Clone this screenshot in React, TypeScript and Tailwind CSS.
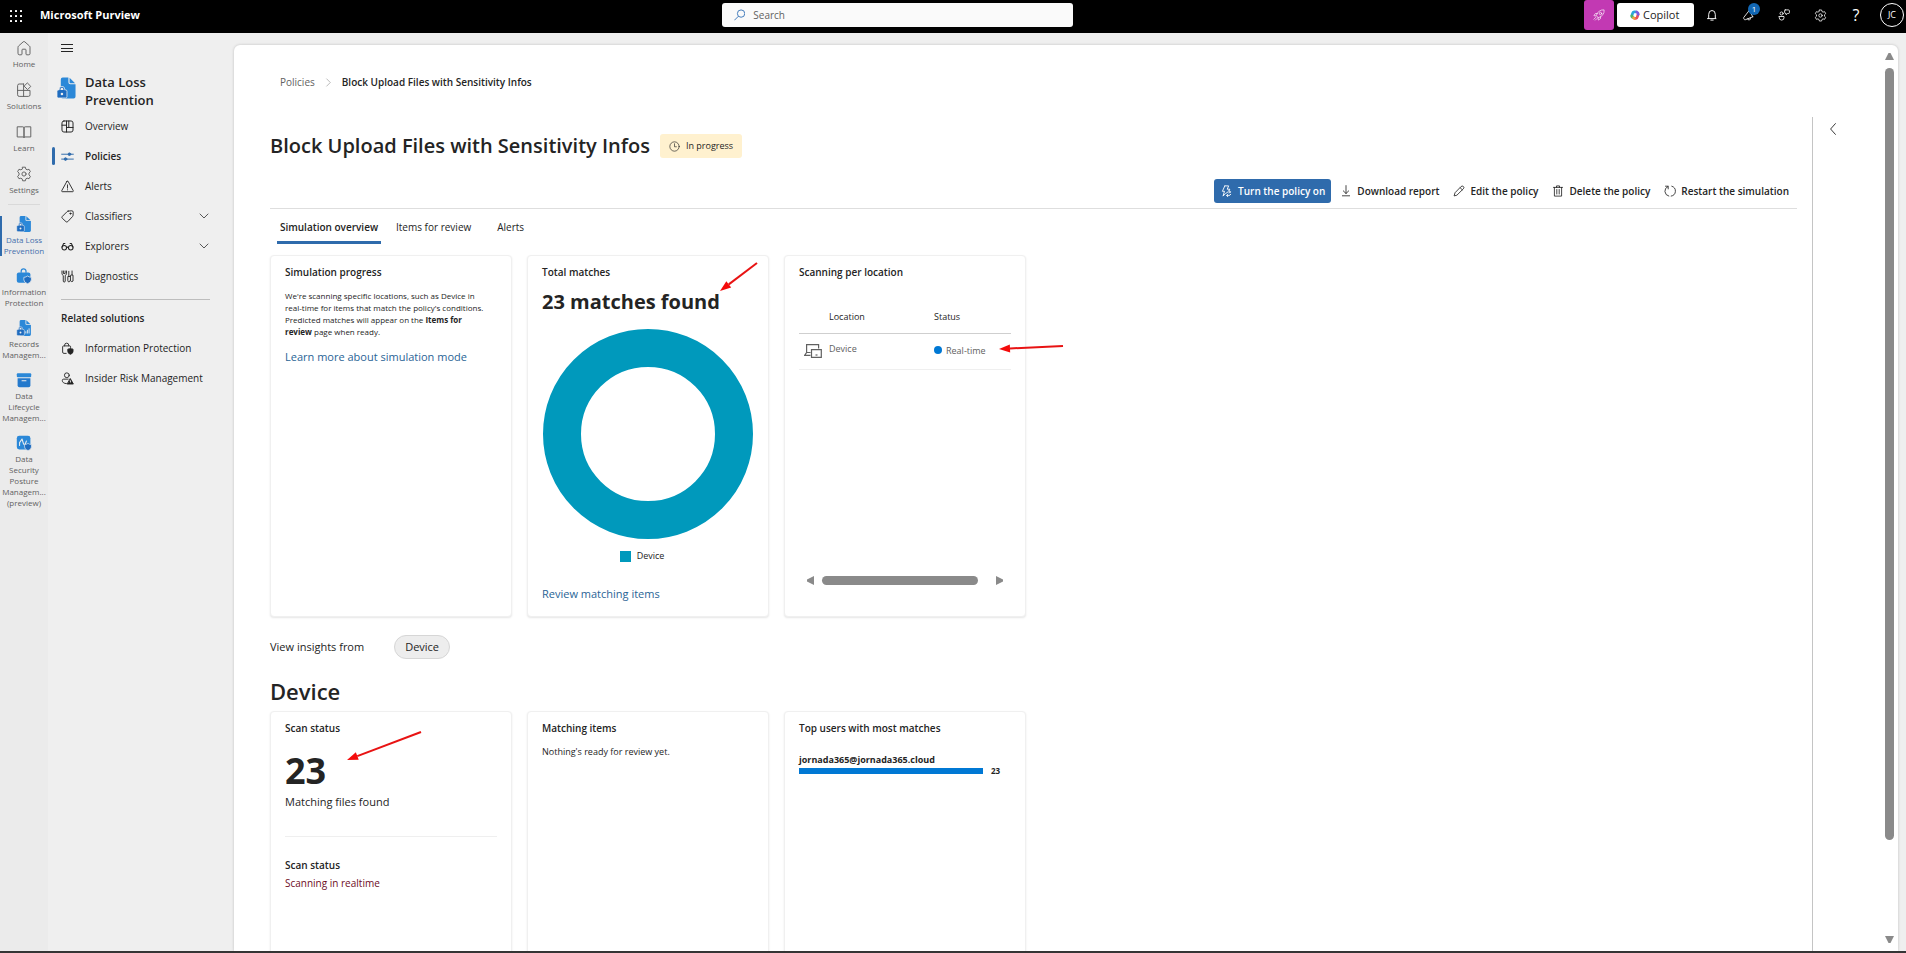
import React from 'react';

type IconProps = { className?: string };

const Stroke: React.FC<{ className?: string; width?: number; children: React.ReactNode }> = ({ className, width = 1.2, children }) => (
  <svg viewBox="0 0 20 20" className={className} fill="none" stroke="currentColor" strokeWidth={width} strokeLinecap="round" strokeLinejoin="round" aria-hidden="true">
    {children}
  </svg>
);

const HomeIcon = ({ className }: IconProps) => (
  <Stroke className={className}>
    <path d="M2.500 9a2 2 0 0 1 .7-1.500L9 2.300a1.500 1.500 0 0 1 2 0l5.800 5.200a2 2 0 0 1 .7 1.500v8a1.500 1.500 0 0 1-1.500 1.500h-2.500a1 1 0 0 1-1-1V12.500a1 1 0 0 0-1-1h-3a1 1 0 0 0-1 1v5a1 1 0 0 1-1 1H4A1.500 1.500 0 0 1 2.500 17Z" />
  </Stroke>
);

const SolutionsIcon = ({ className }: IconProps) => (
  <Stroke className={className}>
    <path d="M9.500 2.500H4A2 2 0 0 0 2 4.500v11.500a2 2 0 0 0 2 2h11.500a2 2 0 0 0 2-2v-5.500H2M9.500 2.500V18" />
    <path d="m14.500 1.500 4 4-4 4-4-4Z" />
  </Stroke>
);

const LearnIcon = ({ className }: IconProps) => (
  <Stroke className={className}>
    <path d="M2 3.500h6.500A1.500 1.500 0 0 1 10 5v12a1 1 0 0 0-1-.8H2Zm16 0h-6.500A1.500 1.500 0 0 0 10 5v12a1 1 0 0 1 1-.8h7Z" />
  </Stroke>
);

const GearIcon = ({ className }: IconProps) => (
  <Stroke className={className}>
    <circle cx="10" cy="10" r="2.600" />
    <path d="M8.300 1.500h3.400l.6 2.400 1.600.9 2.400-.7 1.700 3-1.800 1.700v2.400l1.800 1.700-1.700 3-2.400-.7-1.600.9-.6 2.400H8.300l-.6-2.400-1.600-.9-2.400.7-1.700-3 1.800-1.700V8.800L2 7.100l1.700-3 2.400.7 1.600-.9Z" />
  </Stroke>
);

const OverviewIcon = ({ className }: IconProps) => (
  <Stroke className={className} width={1.5}>
    <rect x="1.500" y="1.500" width="17" height="17" rx="3" />
    <path d="M8.500 1.500v17M1.500 8h7M12 1.500v10M8.500 11.500h10" />
  </Stroke>
);

const PoliciesIcon = ({ className }: IconProps) => (
  <Stroke className={className} width={1.5}>
    <path d="M1 6.500h18M1 14h18" />
    <circle cx="13" cy="6.500" r="2" fill="currentColor" />
    <circle cx="7" cy="14" r="2" fill="currentColor" />
  </Stroke>
);

const AlertIcon = ({ className }: IconProps) => (
  <Stroke className={className} width={1.4}>
    <path d="M9.100 2.100 1.100 16.500a1 1 0 0 0 .9 1.500h16a1 1 0 0 0 .9-1.500L10.900 2.100a1 1 0 0 0-1.800 0ZM10 7.500v5M10 15v.3" />
  </Stroke>
);

const TagIcon = ({ className }: IconProps) => (
  <Stroke className={className} width={1.4}>
    <path d="m11 1.700 5.500-.5a2.300 2.300 0 0 1 2.300 2.300l-.3 5a2 2 0 0 1-.6 1.400l-7.500 8a2 2 0 0 1-2.800 0L2 12.700a2 2 0 0 1 0-2.800l7.500-7.500a2 2 0 0 1 1.500-.7Z" />
    <circle cx="14.500" cy="5.500" r=".9" fill="currentColor" />
  </Stroke>
);

const GlassesIcon = ({ className }: IconProps) => (
  <Stroke className={className} width={1.6}>
    <circle cx="5" cy="12" r="3.500" />
    <circle cx="15" cy="12" r="3.500" />
    <path d="M8.500 11.500q1.500-1 3 0M1.500 11 4 5.500h2M18.500 11 16 5.500h-2" />
  </Stroke>
);

const ToolsIcon = ({ className }: IconProps) => (
  <Stroke className={className} width={1.4}>
    <path d="M1.500 1.500v4Q1.500 7.500 3.500 8.500V17a1.500 1.500 0 0 0 3 0V8.500q2-1 2-3v-4M3.700 1.500v4h2.600v-4M12 2v8M14 10h-3.500v6.500a1.700 1.700 0 0 0 3.500 0M17 1.500v6M15 8q2-1 3.500 0v9q-1.700 2-3.500 0Z" />
  </Stroke>
);

const BagShieldIcon = ({ className }: IconProps) => (
  <Stroke className={className} width={1.4}>
    <path d="M8 17.500H4.500A2 2 0 0 1 2.500 15.500V7.500A1.500 1.500 0 0 1 4 6h9.500A1.500 1.500 0 0 1 15 7.500M5.500 6V5a3.200 3.200 0 0 1 6.400 0v1" />
    <path d="M14.500 9.500q1.500 1.300 4 1.500v3.500q0 3-4 4.500-4-1.500-4-4.500V11q2.500-.2 4-1.500Z" fill="currentColor" />
  </Stroke>
);

const UserRiskIcon = ({ className }: IconProps) => (
  <Stroke className={className} width={1.4}>
    <circle cx="9" cy="5" r="3.700" />
    <path d="M11 11H4a2 2 0 0 0-2 2c0 3 2.500 4.700 6.300 4.900" />
    <path d="m14.500 10.500 4.500 8h-9Z" fill="currentColor" />
    <path d="M14.500 13.500v2" stroke="#efefef" />
  </Stroke>
);

// blue product marks used in the left rail

const BlueFile: React.FC<{ className?: string; chart?: boolean }> = ({ className, chart }) => (
  <svg viewBox="0 0 20 22" className={className} aria-hidden="true">
    <path d="M4 2a2 2 0 0 1 2-2h6v5a2 2 0 0 0 2 2h5.500v13a2 2 0 0 1-2 2H6a2 2 0 0 1-2-2Z" fill="#2b88d8" />
    <path d="M13.200.3 19 6h-5a.8.8 0 0 1-.8-.8Z" fill="#2b88d8" />
    <path d="M0 14.500A1.500 1.500 0 0 1 1.500 13h.8v-.8a2.900 2.900 0 0 1 5.800 0v.8h.9a1.500 1.500 0 0 1 1.500 1.500v5.500A1.500 1.500 0 0 1 9 21.500H1.500A1.500 1.500 0 0 1 0 20Z" fill="#1f6cbf" stroke="#efefef" strokeWidth=".8" />
    <path d="M3.700 13v-.8a1.500 1.500 0 0 1 3 0v.8Z" fill="#efefef" />
    <circle cx="5.200" cy="17.200" r="1.300" fill="#efefef" />
    {chart && <path d="M12.500 18.500v-3M14.700 18.500v-5M17 18.500v-7" stroke="#efefef" strokeWidth="1.200" />}
  </svg>
);

const BlueBag = ({ className }: IconProps) => (
  <svg viewBox="0 0 20 20" className={className} aria-hidden="true">
    <path d="M6.500 6V4a3 3 0 0 1 6 0v2" fill="none" stroke="#2b88d8" strokeWidth="1.600" />
    <rect x="1" y="5.500" width="17" height="13" rx="2.500" fill="#2b88d8" />
    <path d="M14.500 10q1.800 1.500 4.700 1.700v3q0 3.300-4.700 5-4.700-1.700-4.700-5v-3q2.900-.2 4.700-1.700Z" fill="#1f6cbf" stroke="#efefef" strokeWidth=".9" />
  </svg>
);

const BlueArchive = ({ className }: IconProps) => (
  <svg viewBox="0 0 20 20" className={className} aria-hidden="true">
    <rect x="1" y="1.500" width="18" height="5" rx="1.200" fill="#2b88d8" />
    <path d="M2 7.700h16v9a2.300 2.300 0 0 1-2.300 2.300H4.300A2.300 2.300 0 0 1 2 16.700Z" fill="#2479cc" />
    <path d="M7.500 11h5" stroke="#efefef" strokeWidth="1.300" strokeLinecap="round" />
  </svg>
);

const BluePosture = ({ className }: IconProps) => (
  <svg viewBox="0 0 20 20" className={className} aria-hidden="true">
    <rect x="1" y="1" width="17" height="17" rx="3" fill="#2b88d8" />
    <path d="M4.500 13V9.500L7.500 5l2 6.500h2l1.500-4" fill="none" stroke="#efefef" strokeWidth="1.300" strokeLinecap="round" strokeLinejoin="round" />
    <path d="M15 10.500q1.600 1.300 4.300 1.500v3q0 3-4.300 4.500-4.300-1.500-4.300-4.500v-3q2.700-.2 4.300-1.500Z" fill="#1f6cbf" stroke="#efefef" strokeWidth=".8" />
  </svg>
);

// top bar

const RocketIcon = ({ className }: IconProps) => (
  <Stroke className={className} width={1.1}>
    <path d="M7 12.500 5.500 11q1.500-5 5-7.500T18.500 1.500q.5 4.500-2 8T9 14.500ZM7 7.500H4L1.500 11l3.500.7M12.500 13v3L9 18.500l-.7-3.500M4.500 14l-3 3M6.500 16l-2.500 2.500" />
    <circle cx="12.500" cy="7.500" r="2" />
  </Stroke>
);

const CopilotIcon = ({ className }: IconProps) => (
  <svg viewBox="0 0 20 20" className={className} fill="none" strokeWidth="5.500" strokeLinecap="round" aria-hidden="true">
    <path d="M11 3.500H8Q6 3.500 5.200 6.500L4 11" stroke="#2aa5dc" />
    <path d="M3.500 11.500q0 3 3 3.500" stroke="#4bb36b" />
    <path d="M9 16.500h3q2 0 2.800-3L16 9" stroke="#e8505b" />
    <path d="M16.500 8.500q0-3-3-4.500" stroke="#7a5be0" />
    <path d="M8.500 16.500 7 16" stroke="#f0a13c" />
  </svg>
);

const BellIcon = ({ className }: IconProps) => (
  <Stroke className={className} width={1.6}>
    <path d="M4.500 15V9a5.500 6.500 0 0 1 11 0v6l1.500 1H3ZM8 18.500h4" />
  </Stroke>
);

const MegaphoneIcon = ({ className }: IconProps) => (
  <Stroke className={className} width={1.4}>
    <path d="M12 2.500 3 14a1.500 1.500 0 0 0-.1 1.800l.9 1.500a1.500 1.500 0 0 0 1.700.6L18 13M9.500 16.500q.5 2.500 3 1.800 2-.8 1.500-3.300M12 2.500 18 13" />
  </Stroke>
);

const PeopleChatIcon = ({ className }: IconProps) => (
  <Stroke className={className} width={1.4}>
    <circle cx="6" cy="7.500" r="2.600" />
    <path d="M2 12.500h8v2q0 4-4 4t-4-4ZM12 1.500h5.500q1.500 0 1.500 1.500v3q0 1.500-1.500 1.500H16L13.500 9.500v-2q-2.500 0-2.500-2V3q0-1.500 1-1.500Z" />
  </Stroke>
);

// action bar

const BoltIcon = ({ className }: IconProps) => (
  <Stroke className={className} width={1.5}>
    <path d="M8 1.500h6.500L12 7h4.500l-2 2.500M8 1.500 4 10.500h3.500L5 18.500l4-4" />
    <path d="M10 14q1-2.500 4-2.500h3.500M15.500 9.500l2 2-2 2M18 15.500q-1 2-3.500 2h-3M13 15.500l-2 2 2 2" />
  </Stroke>
);

const DownloadIcon = ({ className }: IconProps) => (
  <Stroke className={className} width={1.4}>
    <path d="M10 1v13M5.500 9.800 10 14.200l4.500-4.400M4 18h12" />
  </Stroke>
);

const PencilIcon = ({ className }: IconProps) => (
  <Stroke className={className} width={1.4}>
    <path d="M13.500 2.500a2.500 2.500 0 0 1 3.800 3.800L6.500 17 1.800 18.200 3.200 13.500ZM12 4.600 15.500 8" />
  </Stroke>
);

const TrashIcon = ({ className }: IconProps) => (
  <Stroke className={className} width={1.4}>
    <path d="M2.500 4h15M7.500 4V1.500h5V4M4 4v14.500h12V4M8 7.500v7.500M12 7.500v7.500" />
  </Stroke>
);

const RestartIcon = ({ className }: IconProps) => (
  <Stroke className={className} width={1.4}>
    <path d="M13 2a8.500 8.500 0 0 1-1 16.500M8 18.500A8.500 8.500 0 0 1 6.500 2.500M2.500 2H7v4.500" />
  </Stroke>
);

const ClockIcon = ({ className }: IconProps) => (
  <Stroke className={className}>
    <circle cx="10" cy="10" r="8.500" />
    <path d="M10 5v5.500h3.500" />
  </Stroke>
);

const DevicesIcon = ({ className }: IconProps) => (
  <svg viewBox="0 0 18 14" className={className} fill="none" stroke="currentColor" strokeWidth="1.200" aria-hidden="true">
    <path d="M2.600 8.500V.6h12v4M2.600 8.500.7 11.400h5.800M2.600 8.500h4" />
    <path d="M7.500 5.600h9.800v7.800H7.500Z" fill="#fff" />
    <path d="M11.500 11h2" />
  </svg>
);

const Chevron: React.FC<{ className?: string; d: string }> = ({ className, d }) => (
  <Stroke className={className} width={1.5}>
    <path d={d} />
  </Stroke>
);

const DOWN = 'm2 6 8 8 8-8';
const RIGHT = 'm6 2 8 8-8 8';
const LEFT = 'm14 1-8 9 8 9';

const railTop = [
  { label: 'Home', icon: HomeIcon },
  { label: 'Solutions', icon: SolutionsIcon },
  { label: 'Learn', icon: LearnIcon },
  { label: 'Settings', icon: GearIcon },
];

const railApps = [
  { lines: ['Data Loss', 'Prevention'], icon: <BlueFile className="h-4 w-4" />, active: true },
  { lines: ['Information', 'Protection'], icon: <BlueBag className="h-4 w-4" /> },
  { lines: ['Records', 'Managem...'], icon: <BlueFile className="h-4 w-4" chart /> },
  { lines: ['Data', 'Lifecycle', 'Managem...'], icon: <BlueArchive className="h-4 w-4" /> },
  { lines: ['Data', 'Security', 'Posture', 'Managem...', '(preview)'], icon: <BluePosture className="h-4 w-4" /> },
];

const navItems = [
  { label: 'Overview', icon: OverviewIcon },
  { label: 'Policies', icon: PoliciesIcon, active: true },
  { label: 'Alerts', icon: AlertIcon },
  { label: 'Classifiers', icon: TagIcon, expandable: true },
  { label: 'Explorers', icon: GlassesIcon, expandable: true },
  { label: 'Diagnostics', icon: ToolsIcon },
];

const related = [
  { label: 'Information Protection', icon: BagShieldIcon },
  { label: 'Insider Risk Management', icon: UserRiskIcon },
];

const actions = [
  { label: 'Download report', icon: DownloadIcon },
  { label: 'Edit the policy', icon: PencilIcon },
  { label: 'Delete the policy', icon: TrashIcon },
  { label: 'Restart the simulation', icon: RestartIcon },
];

const topUsers = [{ name: 'jornada365@jornada365.cloud', count: 23 }];

const TopBar = () => (
  <header className="flex h-[33px] shrink-0 items-center justify-between bg-black text-white">
    <div className="flex flex-[13] items-center pb-[2px]">
      <button aria-label="App launcher" className="ml-2.5">
        <svg viewBox="0 0 12 12" className="h-3 w-3" fill="currentColor" aria-hidden="true">
          {[0, 5, 10].map(y => [0, 5, 10].map(x => <rect key={`${x}-${y}`} x={x} y={y} width="2" height="2" rx=".5" />))}
        </svg>
      </button>
      <a href="#" className="ml-[18px] text-[11px] font-bold">Microsoft Purview</a>
    </div>
    <label className="mb-[3px] flex h-6 w-[351px] items-center rounded-[3px] bg-[#fafafa] pl-3">
      <svg viewBox="0 0 12 12" className="h-3 w-3" fill="none" stroke="#3a76b8" aria-hidden="true">
        <circle cx="7.500" cy="4.500" r="3.900" />
        <path d="M4.700 7.300.4 11.600" />
      </svg>
      <input type="search" placeholder="Search" aria-label="Search" className="ml-2 w-full bg-transparent text-[10px] text-[#424242] outline-none placeholder:text-[#616161]" />
    </label>
    <div className="flex flex-[15] items-center justify-end pb-[3px]">
      <button aria-label="What's new" className="grid h-[30px] w-[30px] place-items-center rounded-[3px] bg-[#c239b3]"><RocketIcon className="h-3 w-3" /></button>
      <button className="ml-[3px] flex h-6 w-[77px] items-center rounded-[3px] bg-white pl-[13px] text-[11px] font-medium text-[#242424]">
        <CopilotIcon className="mr-[3px] h-[10px] w-[10px]" />Copilot
      </button>
      <div className="mr-3 ml-1.5 flex gap-3">
        <button aria-label="Notifications" className="grid h-6 w-6 place-items-center"><BellIcon className="h-3 w-3" /></button>
        <button aria-label="Announcements" className="relative grid h-6 w-6 place-items-center">
          <MegaphoneIcon className="h-3 w-3" />
          <span className="absolute top-0 left-3 grid h-3 w-3 place-items-center rounded-full bg-[#1267b4] text-[8px] leading-3">1</span>
        </button>
        <button aria-label="Feedback" className="grid h-6 w-6 place-items-center"><PeopleChatIcon className="h-3 w-3" /></button>
        <button aria-label="Settings" className="grid h-6 w-6 place-items-center"><GearIcon className="h-[13px] w-[13px]" /></button>
        <button aria-label="Help" className="grid h-6 w-6 place-items-center text-base leading-4">?</button>
      </div>
      <button className="mr-0.5 grid h-6 w-6 place-items-center rounded-full border border-white text-[9px]">JC</button>
    </div>
  </header>
);

const Rail = () => (
  <nav className="w-12 shrink-0 bg-[#ebebeb] text-center text-[8px] leading-[11px] text-[#616161]">
    <div className="flex h-[171px] flex-col gap-[13px] pt-[7px]">
      {railTop.map(({ label, icon: Icon }) => (
        <a key={label} href="#" className="flex flex-col items-center gap-0.5">
          <Icon className="h-4 w-4" />
          {label}
        </a>
      ))}
    </div>
    <div className="mx-2 border-t border-[#d9d9d9]" />
    <div className="flex flex-col gap-3 pt-[11px]">
      {railApps.map(app => (
        <a key={app.lines.join()} href="#" className={`flex flex-col items-center gap-0.5 ${app.active ? 'border-l-2 border-[#2f6bac] pr-0.5 text-[#4570ad]' : ''}`}>
          {app.icon}
          <span>
            {app.lines.map(line => <span key={line} className="block">{line}</span>)}
          </span>
        </a>
      ))}
    </div>
  </nav>
);

const SideNav = () => (
  <nav className="w-[186px] shrink-0 pl-1 text-[10px] text-[#242424]">
    <button aria-label="Collapse navigation" className="mt-[9px] ml-[9px] flex h-3 w-3 flex-col justify-between py-0.5">
      <span className="h-px w-full bg-[#242424]" />
      <span className="h-px w-full bg-[#242424]" />
      <span className="h-px w-full bg-[#242424]" />
    </button>
    <div className="mt-[19px] flex items-start gap-[9px] pl-[5px]">
      <BlueFile className="mt-1 h-[22px] w-[19px]" />
      <h2 className="w-24 text-[13px] leading-[18px] font-semibold">Data Loss Prevention</h2>
    </div>
    <ul className="mt-0.5">
      {navItems.map(({ label, icon: Icon, active, expandable }) => (
        <li key={label}>
          <a href="#" className="flex h-[30px] items-center">
            <span className={active ? 'h-[18px] w-[3px] rounded-sm bg-[#2f6bac]' : 'w-[3px]'} />
            <Icon className={active ? 'ml-1.5 h-[13px] w-[13px] text-[#2f6bac]' : 'ml-1.5 h-[13px] w-[13px]'} />
            <span className={active ? 'ml-[11px] font-semibold' : 'ml-[11px]'}>{label}</span>
            {expandable && <Chevron className="mr-[25px] ml-auto h-2.5 w-2.5" d={DOWN} />}
          </a>
        </li>
      ))}
    </ul>
    <hr className="mt-2 mr-6 ml-[9px] border-[#bdbdbd]" />
    <h3 className="mt-[10px] ml-[9px] leading-4 font-semibold">Related solutions</h3>
    <ul className="mt-[7px]">
      {related.map(({ label, icon: Icon }) => (
        <li key={label}>
          <a href="#" className="flex h-[30px] items-center pl-[9px]">
            <Icon className="h-[13px] w-[13px]" />
            <span className="ml-[11px]">{label}</span>
          </a>
        </li>
      ))}
    </ul>
  </nav>
);

const Card: React.FC<{ title: string; className?: string; children: React.ReactNode }> = ({ title, className = '', children }) => (
  <section className={`relative w-[242px] rounded-[4px] border border-[#f0f0f0] bg-white px-3.5 pt-2 shadow-[0_1px_2px_rgba(0,0,0,0.1)] ${className}`}>
    <h3 className="text-[10px] leading-4 font-semibold">{title}</h3>
    {children}
  </section>
);

const RedArrow: React.FC<{ className: string; w: number; h: number }> = ({ className, w, h }) => {
  const len = Math.hypot(w, h);
  const ux = w / len;
  const uy = h / len;
  const bx = ux * 11;
  const by = uy * 11;
  const top = Math.abs(h);
  const y0 = h < 0 ? top : 0;
  return (
    <svg width={w} height={top} className={`absolute z-10 overflow-visible ${className}`} aria-hidden="true">
      <path d={`M${bx} ${y0 + by}L${w} ${y0 + h}`} stroke="#e81313" strokeWidth="2" />
      <path d={`M0 ${y0}L${bx - uy * 4} ${y0 + by + ux * 4}L${bx + uy * 4} ${y0 + by - ux * 4}Z`} fill="#f40b0b" />
    </svg>
  );
};

const App: React.FC = () => (
  <div className="flex h-screen flex-col overflow-hidden bg-[#efefef] font-['Open_Sans',sans-serif] text-[#242424]">
    <TopBar />
    <div className="flex min-h-0 flex-1">
      <Rail />
      <SideNav />
      <main className="mt-3 mr-2 flex min-w-0 flex-1 overflow-hidden rounded-t-md bg-white shadow-[0_0_3px_rgba(0,0,0,0.2)]">
        <div className="min-w-0 flex-1 pr-[15px] pl-9">
          <nav aria-label="Breadcrumb" className="mt-[29px] flex h-4 items-center pl-2.5 text-[10px]">
            <a href="#" className="text-[#616161]">Policies</a>
            <Chevron className="mx-[9px] h-[9px] w-[9px] text-[#9a9a9a]" d={RIGHT} />
            <span className="font-semibold">Block Upload Files with Sensitivity Infos</span>
          </nav>
          <div className="mt-11 flex h-6 items-center gap-2.5">
            <h1 className="text-xl leading-6 font-semibold">Block Upload Files with Sensitivity Infos</h1>
            <span className="flex h-6 items-center gap-1.5 rounded-[3px] bg-[#fff1cf] px-[9px] text-[9px]">
              <ClockIcon className="h-[11px] w-[11px]" />In progress
            </span>
          </div>
          <div className="mt-[21px] flex items-center justify-end gap-[9px] border-b border-[#dedede] pr-2 pb-[5px] text-[10px] font-semibold">
            <button className="flex h-6 items-center gap-1.5 rounded-[3px] bg-[#2f6bac] px-1.5 text-white">
              <BoltIcon className="h-3 w-3" />Turn the policy on
            </button>
            <div className="flex gap-[14px]">
              {actions.map(({ label, icon: Icon }) => (
                <button key={label} className="flex h-6 items-center gap-[5px]"><Icon className="h-3 w-3" />{label}</button>
              ))}
            </div>
          </div>
          <div role="tablist" className="flex h-[35px] pl-[7px] text-[10px]">
            <button role="tab" aria-selected="true" className="w-[104px] border-b-3 border-[#2f6bac] pt-1 font-semibold">Simulation overview</button>
            <button role="tab" aria-selected="false" className="ml-[15px] border-b-3 border-transparent pt-1">Items for review</button>
            <button role="tab" aria-selected="false" className="ml-[26px] border-b-3 border-transparent pt-1">Alerts</button>
          </div>
          <div className="mt-[11px] flex gap-[15px]">
            <Card title="Simulation progress" className="h-[362px]">
              <p className="mt-2.5 pr-2.5 text-[8px] leading-3">
                We're scanning specific locations, such as Device in real-time for items that match the policy's conditions. Predicted matches will appear on the <b>Items for review</b> page when ready.
              </p>
              <a href="#" className="mt-[9px] block text-[11px] leading-5 text-[#2a6496]">Learn more about simulation mode</a>
            </Card>
            <Card title="Total matches" className="h-[362px]">
              <p className="mt-2 text-xl leading-7 font-bold">23 matches found</p>
              <svg viewBox="0 0 212 212" className="mt-3 h-[212px] w-[212px]" role="img" aria-label="Device 23">
                <circle cx="106" cy="106" r="86" fill="none" stroke="#0099bc" strokeWidth="38" />
              </svg>
              <div className="mt-2.5 flex items-center justify-center gap-1.5 pr-3 text-[9px] leading-3">
                <span className="h-[11px] w-[11px] bg-[#0099bc]" />Device
              </div>
              <a href="#" className="mt-[22px] block text-[11px] leading-5 text-[#2a6496]">Review matching items</a>
              <RedArrow className="top-[7px] left-[192px]" w={37} h={-28} />
            </Card>
            <Card title="Scanning per location" className="h-[362px]">
              <table className="mt-[21px] w-full table-fixed text-left text-[9px]">
                <thead>
                  <tr className="h-8 border-b border-[#cfcfcf]">
                    <th className="w-[30px]" />
                    <th className="w-[105px] font-medium">Location</th>
                    <th className="font-medium">Status</th>
                  </tr>
                </thead>
                <tbody>
                  <tr className="h-9 border-b border-[#efefef] text-[#616161]">
                    <td><DevicesIcon className="ml-[5px] h-3.5 w-[18px]" /></td>
                    <td className="pb-1">Device</td>
                    <td><span className="mr-1 inline-block h-2 w-2 rounded-full bg-[#0078d4]" />Real-time</td>
                  </tr>
                </tbody>
              </table>
              <div className="mt-[206px] flex items-center pl-2" aria-hidden="true">
                <svg viewBox="0 0 7 9" className="h-[9px] w-[7px]" fill="#8a8a8a"><path d="M7 0v9L0 5.500v-2Z" /></svg>
                <span className="ml-2 h-[9px] w-[156px] rounded-full bg-[#8a8a8a]" />
                <svg viewBox="0 0 7 9" className="ml-[18px] h-[9px] w-[7px]" fill="#8a8a8a"><path d="M0 0v9l7-3.500v-2Z" /></svg>
              </div>
              <RedArrow className="top-[90px] left-[214px]" w={64} h={-3} />
            </Card>
          </div>
          <div className="mt-[18px] flex h-6 items-center gap-[30px] text-[11px]">
            View insights from
            <button className="h-6 rounded-full border border-[#d6d6d6] bg-[#ededed] px-2.5">Device</button>
          </div>
          <h2 className="mt-[18px] text-[22px] leading-7 font-semibold">Device</h2>
          <div className="mt-[6px] flex gap-[15px]">
            <Card title="Scan status" className="h-[300px]">
              <p className="mt-[15px] text-[36px] leading-10 font-bold">23</p>
              <p className="mt-px text-[11px] leading-5">Matching files found</p>
              <hr className="mt-6 border-[#efefef]" />
              <h3 className="mt-5 text-[10px] leading-4 font-semibold">Scan status</h3>
              <p className="mt-0.5 text-[10px] leading-4 font-medium text-[#6e0b1e]">Scanning in realtime</p>
              <RedArrow className="top-5 left-[76px]" w={74} h={-28} />
            </Card>
            <Card title="Matching items" className="h-[300px]">
              <p className="mt-2.5 text-[9px] leading-3">Nothing's ready for review yet.</p>
            </Card>
            <Card title="Top users with most matches" className="h-[300px]">
              {topUsers.map(user => (
                <div key={user.name} className="mt-[18px] text-[9px] leading-3 font-bold">
                  {user.name}
                  <div className="flex h-2.5 items-center gap-2 text-[8px]">
                    <span className="h-1.5 w-[184px] bg-[#0078d4]" />
                    {user.count}
                  </div>
                </div>
              ))}
            </Card>
          </div>
        </div>
        <aside className="mt-[72px] w-[71px] shrink-0 border-l border-[#c4c4c4] pt-1.5 pl-3.5">
          <button aria-label="Expand panel" className="block"><Chevron className="h-3 w-3" d={LEFT} /></button>
        </aside>
        <div className="flex w-[15px] shrink-0 flex-col items-center pt-2 pr-[3px] pb-2" aria-hidden="true">
          <svg viewBox="0 0 9 7" className="h-[7px] w-[9px]" fill="#8a8a8a"><path d="M0 7h9L5.500 0h-2Z" /></svg>
          <span className="mt-2 mb-24 w-[9px] flex-1 rounded-full bg-[#8a8a8a]" />
          <svg viewBox="0 0 9 7" className="h-[7px] w-[9px]" fill="#8a8a8a"><path d="M0 0h9L5.500 7h-2Z" /></svg>
        </div>
      </main>
    </div>
    <footer className="h-0.5 shrink-0 bg-[#353535]" />
  </div>
);

export default App;
